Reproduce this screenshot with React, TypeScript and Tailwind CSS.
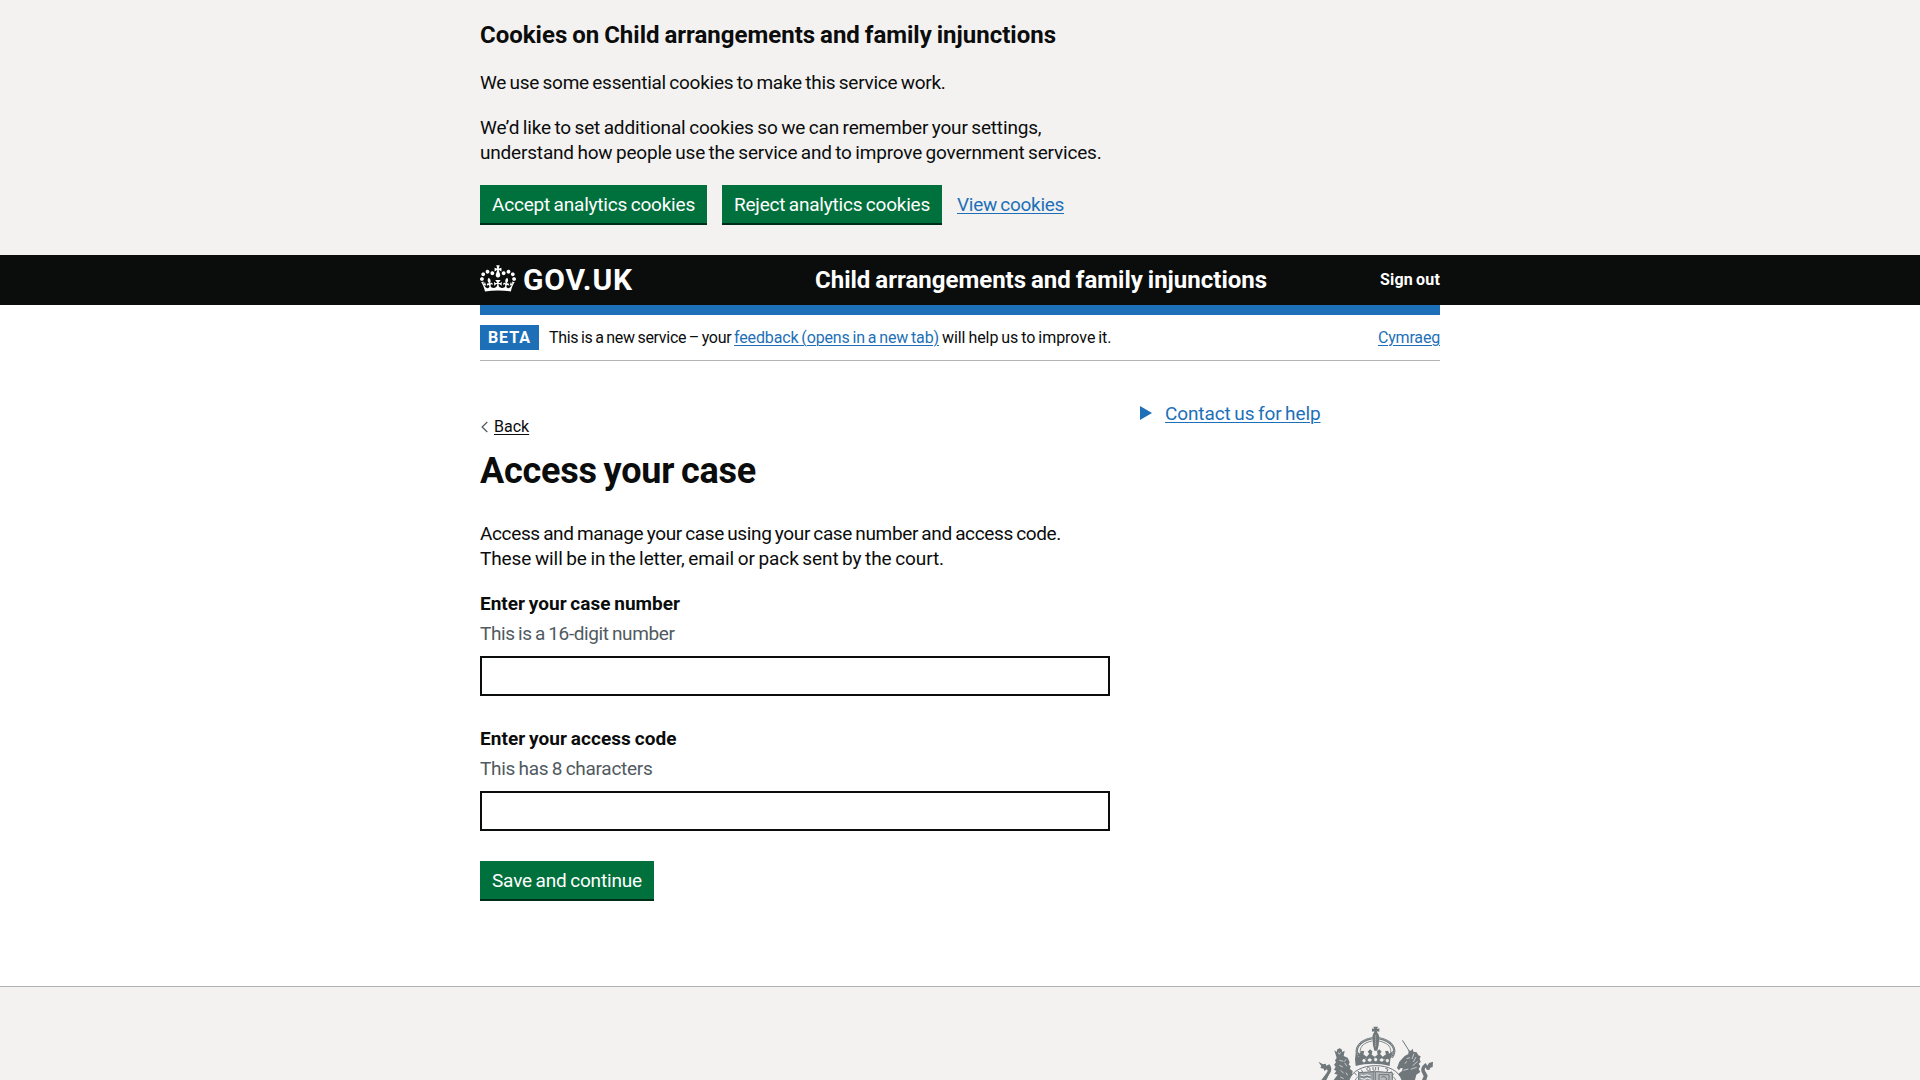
import React from "react";

function Crown() {
  return (
    <svg viewBox="0 0 132 97" className="h-[27px] w-9 shrink-0" fill="currentColor" aria-hidden="true">
      <path
        fillRule="evenodd"
        d="M25 30.2c3.5 1.5 7.7-.2 9.1-3.7 1.5-3.6-.2-7.8-3.9-9.2-3.6-1.4-7.6.3-9.1 3.9-1.4 3.5.3 7.5 3.9 9zM9 39.5c3.6 1.5 7.8-.2 9.2-3.7 1.5-3.6-.2-7.8-3.9-9.1-3.6-1.5-7.6.2-9.1 3.8-1.4 3.5.3 7.5 3.8 9zM4.4 57.2c3.5 1.5 7.7-.2 9.1-3.8 1.5-3.6-.2-7.7-3.9-9.1-3.5-1.5-7.6.3-9.1 3.8-1.4 3.5.3 7.6 3.9 9.1zm38.3-21.4c3.5 1.5 7.7-.2 9.1-3.8 1.5-3.6-.2-7.7-3.9-9.1-3.6-1.5-7.6.3-9.1 3.8-1.3 3.6.4 7.7 3.9 9.1zm64.4-5.6c-3.6 1.5-7.8-.2-9.1-3.7-1.5-3.6.2-7.8 3.8-9.2 3.6-1.4 7.7.3 9.2 3.9 1.3 3.5-.4 7.5-3.9 9zm15.9 9.3c-3.6 1.5-7.7-.2-9.1-3.7-1.5-3.6.2-7.8 3.7-9.1 3.6-1.5 7.7.2 9.2 3.8 1.5 3.5-.3 7.5-3.8 9zm4.7 17.7c-3.6 1.5-7.8-.2-9.2-3.8-1.5-3.6.2-7.7 3.9-9.1 3.6-1.5 7.7.3 9.2 3.8 1.3 3.5-.4 7.6-3.9 9.1zM89.3 35.8c-3.6 1.5-7.8-.2-9.2-3.8-1.4-3.6.2-7.7 3.9-9.1 3.6-1.5 7.7.3 9.2 3.8 1.4 3.6-.3 7.7-3.9 9.1zM69.7 17.7l8.9 4.7V9.3l-8.9 2.8c-.2-.3-.5-.6-.9-.9L72.4 0H59.6l3.5 11.2c-.3.3-.6.5-.9.9l-8.8-2.8v13.1l8.8-4.7c.3.3.6.7.9.9l-5 15.4v.1c-.2.8-.4 1.6-.4 2.4 0 4.1 3.1 7.5 7 8.1h.2c.3 0 .7.1 1 .1.4 0 .7 0 1-.1h.2c4-.6 7.1-4.1 7.1-8.1 0-.8-.1-1.7-.4-2.4V34l-5.1-15.4c.4-.2.7-.6 1-.9zM66 92.8c16.9 0 32.8 1.1 47.1 3.2 4-16.9 8.9-26.7 14-33.5l-9.6-3.4c1 4.9 1.1 7.2 0 10.2-1.5-1.4-3-4.3-4.2-8.7L108.6 76c2.8-2 5-3.2 7.5-3.3-4.4 9.4-10 11.9-13.6 11.2-4.3-.8-6.3-4.6-5.6-7.9 1-4.7 5.7-5.9 8-.5 4.3-8.7-3-11.4-7.6-8.8 7.1-7.2 7.9-13.5 2.1-21.1-8 6.1-8.1 12.3-4.5 20.8-4.7-5.4-12.1-2.5-9.5 6.2 3.4-5.2 7.9-2 7.2 3.1-.6 4.3-6.4 7.8-13.5 7.2-10.3-.9-10.9-8-11.2-13.8 2.5-.5 7.1 1.8 11 7.3L80.2 60c-4.1 4.4-8 5.3-12.3 5.4 1.4-4.4 8-11.6 8-11.6H55.5s6.4 7.2 7.9 11.6c-4.2-.1-8-1-12.3-5.4l1.4 16.4c3.9-5.5 8.5-7.7 10.9-7.3-.3 5.8-.9 12.8-11.1 13.8-7.2.6-12.9-2.9-13.5-7.2-.7-5 3.8-8.3 7.1-3.1 2.7-8.7-4.6-11.6-9.4-6.2 3.7-8.5 3.6-14.7-4.6-20.8-5.8 7.6-5 13.9 2.2 21.1-4.7-2.6-11.9.1-7.7 8.8 2.3-5.5 7.1-4.2 8.1.5.7 3.3-1.3 7.1-5.7 7.9-3.5.7-9-1.8-13.5-11.2 2.5.1 4.7 1.3 7.5 3.3l-4.7-15.4c-1.2 4.4-2.7 7.2-4.3 8.7-1.1-3-.9-5.3 0-10.2l-9.5 3.4c5 6.9 9.9 16.7 14 33.5 14.8-2.1 30.8-3.2 47.7-3.2z"
      />
    </svg>
  );
}

function RoyalArms() {
  return (
    <svg viewBox="45 135 360 306" className="h-[102px] w-[120px] shrink-0" fill="none" aria-hidden="true">
      <g fill="#6f777b" stroke="none">
        {/* cross and orb */}
        <path d="M220 140h14l-3 7 7-2v10l-7-1 2 8h-12l2-8-7 1v-10l7 2z" />
        <path d="M220 160h14l4 10-2 26-4 16h-9l-4-16-2-26z" />
        {/* crown rim and fleurs */}
        <path d="M168 212l12 9 4-9 9 2-3 9 10 7 8-9-5-6 7-7 7 6-2 10 9 6 9-6-2-10 7-6 7 7-5 6 8 9 10-7-3-9 9-2 4 9 12-9-9 26-2 20c-32-9-68-9-102 0l-2-20z" />
        {/* lion */}
        <path d="M103 211l7 5 2-8 7-3 6 3 2 8 7-4-3 16 12 5 6 14-3 7 6 4-2 9 8 6-4 27H101l12-16-10-3 6-8-7-4 5-9-5-6 6-7-3-6 5-7z" />
        <path d="M55 245l14 8 8-2 2 6 9-4c9 11 7 22-1 31l-8 16H64l12-16c7-8 8-12 5-16l-8 5-2-7-10-2 3-6z" />
        {/* unicorn */}
        <path d="M326 210l6 3 6-7 2 9 10 2 5 9 7 3-3 8 3 9-6 5 5 8-5 8 5 9-12 8-4 16h-62l1-10 22-17 2-9-7 1-4 6-6-7 7-19 16-17 11-6z" />
        <path d="M399 245l-1 16-7 2-3 7-8-1-3-7c-5 6-3 10 2 17l4 8-4 13h-13l5-11-5-11c-6-12 1-22 11-29l5 8 5-8z" />
      </g>
      <g stroke="#f3f2f1" strokeWidth="2">
        <path d="M227 166v34M197 235l3 4m24-5h5m26 4l-4 3" strokeDasharray="3 3" />
        <path d="M115 217l3 6 4-6M118 241l12 3m-12 12l11 5m5-12l7 10m-19 12l9 9m2-35l5-7m-17 53l10 5m7-18l5 8M320 236l10-3m12-12l-6 16m12-6l-8 15m13-2l-15 13m12 5l-18 6m-12-24l-5 7m-5 20l15-4" />
        <ellipse cx="192" cy="242" rx="4" ry="4" fill="#f3f2f1" />
        <ellipse cx="209" cy="240" rx="5" ry="4" fill="#f3f2f1" />
        <ellipse cx="227" cy="239" rx="4" ry="4" fill="#f3f2f1" />
        <ellipse cx="245" cy="240" rx="5" ry="4" fill="#f3f2f1" />
        <ellipse cx="262" cy="242" rx="4" ry="4" fill="#f3f2f1" />
      </g>
      <g stroke="#6f777b" strokeLinecap="round">
        <path d="M176 230c-12-18-4-36 16-47 8-5 15-7 23-8M277 230c12-18 4-36-16-47-8-5-15-7-23-8" strokeWidth="7" />
        <path d="M182 222c-5-15 3-27 16-33 6-3 12-5 18-6M271 222c5-15-3-27-16-33-6-3-12-5-18-6" strokeWidth="2.5" />
        <path d="M308 182l19 30" strokeWidth="3" />
      </g>
      <g stroke="#f3f2f1" strokeWidth="2" strokeDasharray="2.5 4">
        <path d="M176 230c-12-18-4-36 16-47 8-5 15-7 23-8M277 230c12-18 4-36-16-47-8-5-15-7-23-8" />
      </g>
      {/* garter and shield */}
      <path d="M147 300c10-28 42-43 80-43s69 15 79 43l-12 80-67 40-68-40z" fill="#f3f2f1" stroke="#6f777b" strokeWidth="3" />
      <path d="M166 300c8-16 30-25 61-25s52 9 60 25" stroke="#6f777b" strokeWidth="2.5" />
      <path d="M164 279l6 7m4-13l5 8m5-12l4 8m68-12l8 3-4 8m14-2l-5 7m13 0l-6 6" stroke="#6f777b" strokeWidth="3" />
      <path d="M205 262c-6 1-6 9 0 10 6 0 7-9 0-10zm5 9l3 3M219 261v7c0 4 8 4 8 0v-7M235 261v10" stroke="#6f777b" strokeWidth="3" />
      <path d="M176 278l46-3v70h-46z" fill="#9ba1a4" stroke="#6f777b" strokeWidth="3" />
      <path d="M226 275l51 3v67h-51z" fill="#b5b9ba" stroke="#6f777b" strokeWidth="3" />
      <path d="M182 285l10 3 8-4 12 4m-30 7l12 3 8-4 12 4" stroke="#f3f2f1" strokeWidth="3" />
      <path d="M182 290l10 2 8-3 12 3M237 284h30v16M237 300v-16M244 292l8-3 7 5v6" stroke="#6f777b" strokeWidth="3" />
    </svg>
  );
}

const linkClass = "text-[#1d70b8] underline decoration-1 underline-offset-2";
const buttonClass =
  "h-[38px] bg-[#00703c] px-3 pt-px text-[19px] leading-[37px] text-white shadow-[0_2px_0_#002d18] whitespace-nowrap [word-spacing:-1px]";

function Field({ id, label, labelClass, hint, hintClass }: { id: string; label: string; labelClass: string; hint: string; hintClass: string }) {
  return (
    <div className="mb-[30px] flex flex-col">
      <label htmlFor={id} className={`mb-[5px] font-bold ${labelClass}`}>{label}</label>
      <div className={`mb-2.5 text-[#505a5f] ${hintClass}`}>{hint}</div>
      <input id={id} className="h-10 w-full border-2 border-[#0b0c0c] bg-white px-[5px] outline-none" />
    </div>
  );
}

export default function App() {
  return (
    <div className="flex h-screen flex-col overflow-hidden bg-white font-['Roboto',sans-serif] text-[19px] leading-[25px] text-[#0b0c0c] [word-spacing:-1px]">
      <section className="h-[255px] shrink-0 bg-[#f3f2f1] pt-5">
        <div className="mx-auto w-[960px] whitespace-nowrap">
          <h2 className="mb-5 text-2xl leading-[30px] font-bold tracking-[-0.003px]">Cookies on Child arrangements and family injunctions</h2>
          <p className="mb-5 tracking-[-0.269px]">We use some essential cookies to make this service work.</p>
          <p className="mb-5">
            <span className="block tracking-[-0.162px]">We’d like to set additional cookies so we can remember your settings,</span>
            <span className="block tracking-[-0.19px]">understand how people use the service and to improve government services.</span>
          </p>
          <div className="flex items-start">
            <button className={`${buttonClass} mr-[15px] w-[227px] tracking-[-0.199px]`}>Accept analytics cookies</button>
            <button className={`${buttonClass} mr-[15px] w-[220px] tracking-[-0.209px]`}>Reject analytics cookies</button>
            <a className={`${linkClass} mt-[7px] tracking-[-0.295px]`}>View cookies</a>
          </div>
        </div>
      </section>

      <header className="h-[50px] shrink-0 bg-[#0b0c0c] text-white">
        <div className="mx-auto flex h-full w-[960px] items-center font-bold whitespace-nowrap">
          <div className="flex w-[335px] items-center gap-[7px]">
            <div className="-mt-[3px]"><Crown /></div>
            <span className="text-[30px] leading-[30px] tracking-[0.873px]">GOV.UK</span>
          </div>
          <span className="text-2xl leading-[30px] tracking-[0.004px]">Child arrangements and family injunctions</span>
          <a className="ml-auto text-base leading-5 tracking-[0.178px]">Sign out</a>
        </div>
      </header>

      <div className="mx-auto flex w-[960px] shrink-0 flex-col">
        <div className="h-2.5 bg-[#1d70b8]" />
        <div className="flex h-[46px] items-center border-b border-[#b1b4b6] text-base whitespace-pre">
          <strong className="mr-2.5 flex h-[25px] w-[59px] items-center justify-center bg-[#1d70b8] font-bold tracking-[1px] text-white">BETA</strong>
          <span className="pt-px tracking-[-0.297px]">{"This is a new service – your "}</span>
          <a className={`${linkClass} pt-px tracking-[-0.132px]`}>feedback (opens in a new tab)</a>
          <span className="pt-px tracking-[-0.04px]">{" will help us to improve it."}</span>
          <a className={`${linkClass} ml-auto pt-px tracking-[-0.185px]`}>Cymraeg</a>
        </div>
      </div>

      <div className="mx-auto flex w-[960px] shrink-0 gap-[30px] whitespace-nowrap">
        <main className="flex w-[630px] flex-col items-start pt-14">
          <a className="mb-3.5 flex items-center text-base leading-5">
            <svg viewBox="0 0 14 12" className="-mt-px h-3 w-3.5" fill="none" stroke="#505a5f" strokeWidth="1.2" aria-hidden="true">
              <path d="M7.3 1L2.1 6l5.2 5" />
            </svg>
            <span className="underline decoration-1 underline-offset-2">Back</span>
          </a>
          <h1 className="mb-[30px] text-4xl leading-10 font-bold tracking-[-0.219px] [word-spacing:-2px]">Access your case</h1>
          <p className="mb-5">
            <span className="block tracking-[-0.364px]">Access and manage your case using your case number and access code.</span>
            <span className="block tracking-[-0.094px]">These will be in the letter, email or pack sent by the court.</span>
          </p>
          <form className="w-full">
            <Field id="case-number" label="Enter your case number" labelClass="tracking-[0.016px]" hint="This is a 16-digit number" hintClass="tracking-[-0.384px]" />
            <Field id="access-code" label="Enter your access code" labelClass="tracking-[0.057px]" hint="This has 8 characters" hintClass="tracking-[-0.275px]" />
            <button type="button" className={`${buttonClass} w-[174px] tracking-[-0.162px]`}>Save and continue</button>
          </form>
        </main>
        <aside className="mt-10 flex h-[25px] w-[300px] items-center">
          <svg viewBox="0 0 12 14" className="-mt-px mr-[13px] h-3.5 w-3" fill="#1d70b8" aria-hidden="true">
            <path d="M0 0l12 7-12 7z" />
          </svg>
          <a className={`${linkClass} tracking-[-0.107px]`}>Contact us for help</a>
        </aside>
      </div>

      <footer className="mt-[87px] h-[94px] shrink-0 overflow-hidden border-t border-[#b1b4b6] bg-[#f3f2f1]">
        <div className="mx-auto flex w-[960px] justify-end pt-[38px] pr-[5px]">
          <RoyalArms />
        </div>
      </footer>
    </div>
  );
}
